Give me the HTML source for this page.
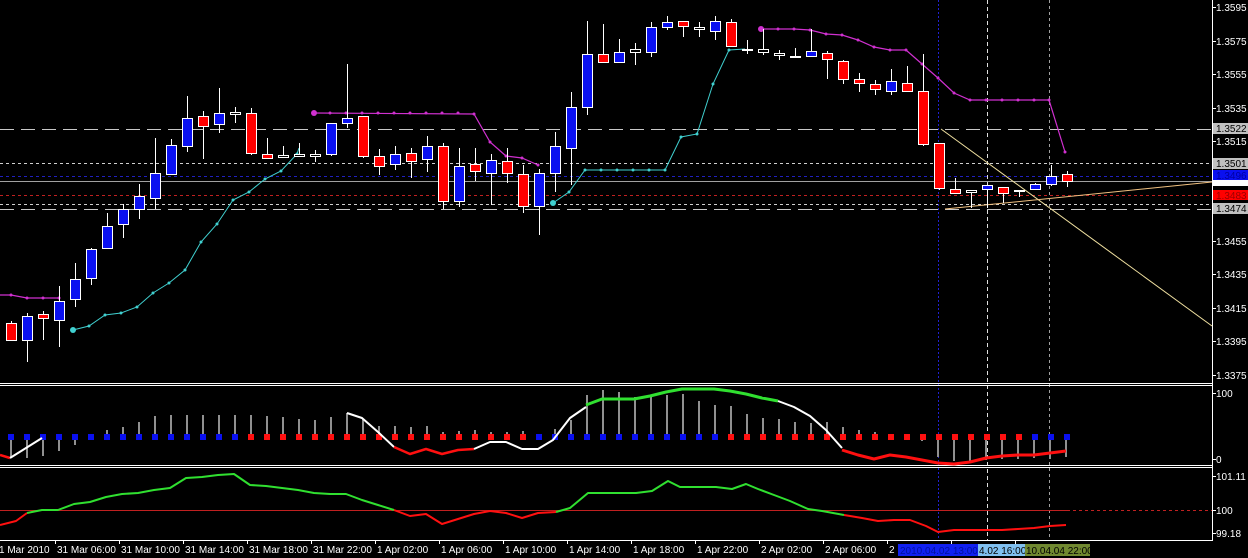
<!DOCTYPE html>
<html><head><meta charset="utf-8"><style>
html,body{margin:0;padding:0;background:#000;width:1248px;height:558px;overflow:hidden}
svg{display:block}
text{font-family:"Liberation Sans",sans-serif;font-size:10px;fill:#fff}
</style></head><body>
<svg width="1248" height="558" viewBox="0 0 1248 558" xmlns="http://www.w3.org/2000/svg">
<rect width="1248" height="558" fill="#000"/>
<g stroke-width="1" fill="none">
<line x1="0" y1="129.5" x2="1212" y2="129.5" stroke="#c8c8c8" stroke-dasharray="14,7"/>
<line x1="0" y1="163.5" x2="1212" y2="163.5" stroke="#d0d0d0" stroke-dasharray="3,3"/>
<line x1="0" y1="176.5" x2="1212" y2="176.5" stroke="#2020c0" stroke-dasharray="3,3"/>
<line x1="0" y1="181.5" x2="1212" y2="181.5" stroke="#a0a0a0"/>
<line x1="0" y1="195.5" x2="1212" y2="195.5" stroke="#c02020" stroke-dasharray="3,3"/>
<line x1="0" y1="204.5" x2="1212" y2="204.5" stroke="#d0d0d0" stroke-dasharray="3,3"/>
<line x1="0" y1="209.5" x2="1212" y2="209.5" stroke="#c8c8c8" stroke-dasharray="14,7"/>
<line x1="938.5" y1="0" x2="938.5" y2="540" stroke="#2020d0" stroke-dasharray="2,2"/>
<line x1="987.5" y1="0" x2="987.5" y2="540" stroke="#e0e0e0" stroke-dasharray="4,3"/>
<line x1="1049.5" y1="0" x2="1049.5" y2="540" stroke="#a0a0a0" stroke-dasharray="3,3"/>
<line x1="941" y1="129" x2="1212" y2="326" stroke="#f0e0a0"/>
<line x1="945" y1="209" x2="1212" y2="182" stroke="#f0c080"/>
</g>
<g stroke="#d030d0" stroke-width="1.2" fill="none">
<polyline points="0,295 11,295 27,298 43,298 59,298"/>
<polyline points="314,113 474,114 490,142 506,156 522,158 538,165"/>
<polyline points="761,29 794,29 810,30 826,34 842,35 858,40 874,47 890,50 906,50 922,64 938,78 954,93 970,100 1049,100 1065,152"/>
</g>
<g fill="#d030d0">
<circle cx="314" cy="113" r="3"/><circle cx="761" cy="29" r="3"/>
<circle cx="11" cy="295" r="1.5"/><circle cx="27" cy="298" r="1.5"/><circle cx="43" cy="298" r="1.5"/><circle cx="59" cy="298" r="1.5"/>
<circle cx="330" cy="113" r="1.5"/><circle cx="346" cy="113" r="1.5"/><circle cx="362" cy="113" r="1.5"/><circle cx="378" cy="113" r="1.5"/><circle cx="394" cy="113" r="1.5"/><circle cx="410" cy="113" r="1.5"/><circle cx="426" cy="113" r="1.5"/><circle cx="442" cy="113" r="1.5"/><circle cx="458" cy="113" r="1.5"/><circle cx="474" cy="114" r="1.5"/><circle cx="490" cy="142" r="1.5"/><circle cx="506" cy="156" r="1.5"/><circle cx="522" cy="158" r="1.5"/><circle cx="538" cy="165" r="1.5"/>
<circle cx="778" cy="29" r="1.5"/><circle cx="794" cy="29" r="1.5"/><circle cx="810" cy="30" r="1.5"/><circle cx="826" cy="34" r="1.5"/><circle cx="842" cy="35" r="1.5"/><circle cx="858" cy="40" r="1.5"/><circle cx="874" cy="47" r="1.5"/><circle cx="890" cy="50" r="1.5"/><circle cx="906" cy="50" r="1.5"/><circle cx="922" cy="64" r="1.5"/><circle cx="938" cy="78" r="1.5"/><circle cx="954" cy="93" r="1.5"/><circle cx="970" cy="100" r="1.5"/><circle cx="986" cy="100" r="1.5"/><circle cx="1002" cy="100" r="1.5"/><circle cx="1018" cy="100" r="1.5"/><circle cx="1034" cy="100" r="1.5"/><circle cx="1049" cy="100" r="1.5"/><circle cx="1065" cy="152" r="1.5"/>
</g>
<g stroke="#40d0d0" stroke-width="1" fill="none">
<polyline points="73,330 89,326 105,315 121,313 137,307 153,293 169,283 185,270 201,242 217,224 233,200 249,192 265,179 281,171 297,154 299,148"/>
<polyline points="553,203 569,192 585,170 665,170 681,137 697,134 713,84 729,50 745,49"/>
</g>
<g fill="#40d0d0">
<circle cx="73" cy="330" r="3"/><circle cx="553" cy="203" r="3"/>
<circle cx="89" cy="326" r="1.5"/><circle cx="105" cy="315" r="1.5"/><circle cx="121" cy="313" r="1.5"/><circle cx="137" cy="307" r="1.5"/><circle cx="153" cy="293" r="1.5"/><circle cx="169" cy="283" r="1.5"/><circle cx="185" cy="270" r="1.5"/><circle cx="201" cy="242" r="1.5"/><circle cx="217" cy="224" r="1.5"/><circle cx="233" cy="200" r="1.5"/><circle cx="249" cy="192" r="1.5"/><circle cx="265" cy="179" r="1.5"/><circle cx="281" cy="171" r="1.5"/><circle cx="297" cy="154" r="1.5"/>
<circle cx="569" cy="192" r="1.5"/><circle cx="585" cy="170" r="1.5"/><circle cx="601" cy="170" r="1.5"/><circle cx="617" cy="170" r="1.5"/><circle cx="633" cy="170" r="1.5"/><circle cx="649" cy="170" r="1.5"/><circle cx="665" cy="170" r="1.5"/><circle cx="681" cy="137" r="1.5"/><circle cx="697" cy="134" r="1.5"/><circle cx="713" cy="84" r="1.5"/><circle cx="729" cy="50" r="1.5"/>
</g>
<path stroke="#fff" stroke-width="1" fill="none" d="M11.5 321V341M27.5 313V362M43.5 311V340M59.5 286V347M75.5 263V307M91.5 248V285M107.5 213V248M123.5 204V238M139.5 184V219M155.5 138V209M171.5 139V175M187.5 96V152M203.5 111V159M219.5 88V133M235.5 107V123M251.5 108V155M267.5 138V158M283.5 146V158M299.5 143V156M315.5 150V162M331.5 123V156M347.5 64V128M363.5 116V158M379.5 149V175M395.5 146V170M411.5 148V178M427.5 136V172M443.5 143V209M459.5 148V207M475.5 148V181M491.5 154V205M507.5 148V183M523.5 165V213M539.5 169V235M555.5 132V192M571.5 92V185M587.5 21V115M603.5 24V62M619.5 39V62M635.5 43V65M651.5 22V57M667.5 16V30M683.5 21V37M699.5 22V37M715.5 16V40M731.5 19V47M747.5 40V54M763.5 29V55M779.5 50V60M795.5 48V57M811.5 29V57M827.5 51V79M843.5 60V84M859.5 73V92M875.5 80V95M891.5 69V95M907.5 66V91M923.5 54V146M939.5 143V190M955.5 178V193M971.5 190V208M987.5 185V208M1003.5 187V203M1019.5 190V197M1035.5 183V190M1051.5 165V186M1067.5 171V187"/>
<g stroke="#fff" stroke-width="1">
<g fill="#ff0000">
<rect x="6.5" y="323.5" width="10" height="17"/><rect x="38.5" y="314.5" width="10" height="4"/><rect x="198.5" y="116.5" width="10" height="10"/><rect x="246.5" y="113.5" width="10" height="40"/><rect x="262.5" y="154.5" width="10" height="4"/><rect x="358.5" y="116.5" width="10" height="40"/><rect x="374.5" y="156.5" width="10" height="10"/><rect x="406.5" y="153.5" width="10" height="8"/><rect x="438.5" y="146.5" width="10" height="55"/><rect x="470.5" y="164.5" width="10" height="7"/><rect x="502.5" y="161.5" width="10" height="12"/><rect x="518.5" y="174.5" width="10" height="32"/><rect x="598.5" y="54.5" width="10" height="8"/><rect x="678.5" y="21.5" width="10" height="5"/><rect x="726.5" y="22.5" width="10" height="24"/><rect x="822.5" y="53.5" width="10" height="6"/><rect x="838.5" y="61.5" width="10" height="18"/><rect x="854.5" y="79.5" width="10" height="4"/><rect x="870.5" y="84.5" width="10" height="5"/><rect x="902.5" y="83.5" width="10" height="8"/><rect x="918.5" y="91.5" width="10" height="53"/><rect x="934.5" y="143.5" width="10" height="45"/><rect x="950.5" y="189.5" width="10" height="4"/><rect x="998.5" y="187.5" width="10" height="6"/><rect x="1062.5" y="174.5" width="10" height="7"/>
</g>
<g fill="#0a10f0">
<rect x="22.5" y="316.5" width="10" height="24"/><rect x="54.5" y="301.5" width="10" height="19"/><rect x="70.5" y="279.5" width="10" height="20"/><rect x="86.5" y="249.5" width="10" height="29"/><rect x="102.5" y="226.5" width="10" height="22"/><rect x="118.5" y="209.5" width="10" height="15"/><rect x="134.5" y="196.5" width="10" height="13"/><rect x="150.5" y="173.5" width="10" height="25"/><rect x="166.5" y="145.5" width="10" height="29"/><rect x="182.5" y="118.5" width="10" height="28"/><rect x="214.5" y="113.5" width="10" height="11"/><rect x="326.5" y="123.5" width="10" height="31"/><rect x="342.5" y="118.5" width="10" height="5"/><rect x="390.5" y="154.5" width="10" height="10"/><rect x="422.5" y="146.5" width="10" height="13"/><rect x="454.5" y="166.5" width="10" height="35"/><rect x="486.5" y="160.5" width="10" height="13"/><rect x="534.5" y="173.5" width="10" height="33"/><rect x="550.5" y="146.5" width="10" height="27"/><rect x="566.5" y="107.5" width="10" height="41"/><rect x="582.5" y="54.5" width="10" height="53"/><rect x="614.5" y="52.5" width="10" height="10"/><rect x="646.5" y="27.5" width="10" height="25"/><rect x="662.5" y="22.5" width="10" height="5"/><rect x="710.5" y="21.5" width="10" height="10"/><rect x="806.5" y="51.5" width="10" height="5"/><rect x="886.5" y="81.5" width="10" height="10"/><rect x="982.5" y="185.5" width="10" height="4"/><rect x="1030.5" y="184.5" width="10" height="5"/><rect x="1046.5" y="176.5" width="10" height="8"/>
</g>
<g fill="#000">
<rect x="230.5" y="112.5" width="10" height="2"/><rect x="278.5" y="155.5" width="10" height="2"/><rect x="294.5" y="154.5" width="10" height="2"/><rect x="310.5" y="154.5" width="10" height="2"/><rect x="630.5" y="49.5" width="10" height="3"/><rect x="694.5" y="27.5" width="10" height="2"/><rect x="742.5" y="49.5" width="10" height="1"/><rect x="758.5" y="49.5" width="10" height="3"/><rect x="774.5" y="53.5" width="10" height="2"/><rect x="790.5" y="56.5" width="10" height="1"/><rect x="966.5" y="190.5" width="10" height="2"/><rect x="1014.5" y="190.5" width="10" height="1"/>
</g>
</g>
<g stroke="#fff" stroke-width="1" fill="none">
<line x1="0" y1="383.5" x2="1212" y2="383.5"/><line x1="0" y1="385.5" x2="1212" y2="385.5"/>
<line x1="0" y1="465.5" x2="1212" y2="465.5"/><line x1="0" y1="467.5" x2="1212" y2="467.5"/>
<line x1="0" y1="540.5" x2="1212" y2="540.5"/>
<line x1="1212.5" y1="0" x2="1212.5" y2="541"/>
</g>
<path stroke="#909090" stroke-width="2" fill="none" d="M11 437V458M27 437V458M43 437V456M59 437V451M75 437V445M107 437V430M123 437V427M139 437V422M155 437V416M171 437V415M187 437V415M203 437V415M219 437V415M235 437V415M251 437V415M267 437V416M283 437V417M299 437V419M315 437V420M331 437V417M347 437V413M363 437V419M379 437V426M395 437V426M411 437V427M427 437V426M443 437V432M459 437V431M475 437V430M491 437V432M507 437V432M523 437V431M555 437V429M571 437V420M587 437V395M603 437V390M619 437V392M635 437V397M651 437V396M667 437V395M683 437V394M699 437V401M715 437V405M731 437V406M747 437V414M763 437V418M779 437V419M795 437V422M811 437V423M827 437V422M843 437V427M859 437V430M875 437V432M891 437V434M922 437V441M938 437V457M954 437V461M970 437V461M986 437V460M1002 437V459M1018 437V459M1034 437V458M1050 437V459M1066 437V457"/>
<g fill="#0a10f0">
<rect x="8" y="434" width="6" height="6"/><rect x="24" y="434" width="6" height="6"/><rect x="40" y="434" width="6" height="6"/><rect x="56" y="434" width="6" height="6"/><rect x="72" y="434" width="6" height="6"/><rect x="88" y="434" width="6" height="6"/><rect x="104" y="434" width="6" height="6"/><rect x="120" y="434" width="6" height="6"/><rect x="136" y="434" width="6" height="6"/><rect x="152" y="434" width="6" height="6"/><rect x="168" y="434" width="6" height="6"/><rect x="184" y="434" width="6" height="6"/><rect x="200" y="434" width="6" height="6"/><rect x="216" y="434" width="6" height="6"/><rect x="232" y="434" width="6" height="6"/>
<rect x="536" y="434" width="6" height="6"/><rect x="552" y="434" width="6" height="6"/><rect x="568" y="434" width="6" height="6"/><rect x="584" y="434" width="6" height="6"/><rect x="600" y="434" width="6" height="6"/><rect x="616" y="434" width="6" height="6"/><rect x="632" y="434" width="6" height="6"/><rect x="648" y="434" width="6" height="6"/><rect x="664" y="434" width="6" height="6"/><rect x="680" y="434" width="6" height="6"/><rect x="696" y="434" width="6" height="6"/><rect x="712" y="434" width="6" height="6"/>
<rect x="1032" y="434" width="6" height="6"/><rect x="1048" y="434" width="6" height="6"/><rect x="1064" y="434" width="6" height="6"/>
</g>
<g fill="#ff1010">
<rect x="248" y="434" width="6" height="6"/><rect x="264" y="434" width="6" height="6"/><rect x="280" y="434" width="6" height="6"/><rect x="296" y="434" width="6" height="6"/><rect x="312" y="434" width="6" height="6"/><rect x="328" y="434" width="6" height="6"/><rect x="344" y="434" width="6" height="6"/><rect x="360" y="434" width="6" height="6"/><rect x="376" y="434" width="6" height="6"/><rect x="392" y="434" width="6" height="6"/><rect x="408" y="434" width="6" height="6"/><rect x="424" y="434" width="6" height="6"/><rect x="440" y="434" width="6" height="6"/><rect x="456" y="434" width="6" height="6"/><rect x="472" y="434" width="6" height="6"/><rect x="488" y="434" width="6" height="6"/><rect x="504" y="434" width="6" height="6"/><rect x="520" y="434" width="6" height="6"/>
<rect x="728" y="434" width="6" height="6"/><rect x="744" y="434" width="6" height="6"/><rect x="760" y="434" width="6" height="6"/><rect x="776" y="434" width="6" height="6"/><rect x="792" y="434" width="6" height="6"/><rect x="808" y="434" width="6" height="6"/><rect x="824" y="434" width="6" height="6"/><rect x="840" y="434" width="6" height="6"/><rect x="856" y="434" width="6" height="6"/><rect x="872" y="434" width="6" height="6"/><rect x="888" y="434" width="6" height="6"/><rect x="904" y="434" width="6" height="6"/><rect x="920" y="434" width="6" height="6"/><rect x="936" y="434" width="6" height="6"/><rect x="952" y="434" width="6" height="6"/><rect x="968" y="434" width="6" height="6"/><rect x="984" y="434" width="6" height="6"/><rect x="1000" y="434" width="6" height="6"/><rect x="1016" y="434" width="6" height="6"/>
</g>
<g fill="none" stroke-width="2.5" stroke-linejoin="round">
<polyline stroke="#ff1010" points="0,455 10,458"/>
<polyline stroke="#fff" stroke-width="2" points="10,458 26,448 42,438"/>
<polyline stroke="#fff" stroke-width="2" points="347,413 362,418 378,432 394,447"/>
<polyline stroke="#ff1010" points="394,447 410,454 426,449 442,454 458,450 474,449"/>
<polyline stroke="#fff" stroke-width="2" points="474,449 490,442 506,442 522,449 538,449 553,440 570,418 586,407"/>
<polyline stroke="#30e030" stroke-width="3" points="586,405 602,399 618,399 634,399 650,396 666,392 682,389 698,389 714,389 730,391 746,394 762,398 778,401"/>
<polyline stroke="#fff" stroke-width="2" points="778,401 794,407 810,416 826,430 842,448"/>
<polyline stroke="#ff1010" stroke-width="3" points="842,450 858,455 874,459 890,455 906,457 922,460 938,463 954,464 970,462 986,458 1002,456 1018,455 1034,455 1050,453 1066,451"/>
</g>
<line x1="0" y1="510.5" x2="1067" y2="510.5" stroke="#c02020" stroke-width="1"/>
<line x1="1067" y1="510.5" x2="1212" y2="510.5" stroke="#c02020" stroke-dasharray="3,3"/>
<g fill="none" stroke-width="2" stroke-linejoin="round">
<polyline stroke="#ff1010" points="0,525 16,521 27,513"/>
<polyline stroke="#30e030" points="27,513 42,510 58,510 74,504 90,502 106,497 122,494 138,493 154,490 170,488 186,478 202,477 218,475 234,474 250,485 266,486 282,488 298,490 314,493 330,494 346,494 362,500 378,505 394,510"/>
<polyline stroke="#ff1010" points="394,510 410,516 426,514 442,524 458,519 474,514 490,511 506,513 522,518 538,513 556,512"/>
<polyline stroke="#30e030" points="556,512 570,508 588,493 604,493 620,493 636,493 652,491 668,481 680,487 700,487 716,487 732,489 746,484 758,489 774,495 790,501 808,509 822,511 844,515"/>
<polyline stroke="#ff1010" points="844,515 862,518 878,521 894,520 910,520 926,526 938,532 954,530 970,530 986,530 1002,530 1018,529 1034,528 1050,526 1066,525"/>
</g>
<g stroke="#fff"><path d="M1212 7.5h4M1212 41.5h4M1212 74.5h4M1212 108.5h4M1212 141.5h4M1212 241.5h4M1212 274.5h4M1212 308.5h4M1212 341.5h4M1212 375.5h4M1212 393.5h4M1212 459.5h4M1212 476.5h4M1212 510.5h4M1212 533.5h4"/></g>
<text x="1216" y="11">1.3595</text><text x="1216" y="45">1.3575</text><text x="1216" y="78">1.3555</text><text x="1216" y="112">1.3535</text><text x="1216" y="145">1.3515</text><text x="1216" y="245">1.3455</text><text x="1216" y="278">1.3435</text><text x="1216" y="312">1.3415</text><text x="1216" y="345">1.3395</text><text x="1216" y="379">1.3375</text>
<rect x="1213" y="123" width="35" height="11" fill="#c0c0c0"/><text x="1216" y="132" style="fill:#000">1.3522</text>
<rect x="1213" y="158" width="35" height="11" fill="#c0c0c0"/><text x="1216" y="167" style="fill:#000">1.3501</text>
<rect x="1213" y="170" width="35" height="10" fill="#0a10f0"/><text x="1216" y="179" style="fill:#0000a0">1.3496</text>
<rect x="1213" y="180" width="35" height="6" fill="#fff"/>
<rect x="1213" y="190" width="35" height="10" fill="#ff0000"/><text x="1216" y="199" style="fill:#900">1.3483</text>
<rect x="1213" y="203" width="35" height="11" fill="#c0c0c0"/><text x="1216" y="212" style="fill:#000">1.3474</text>
<text x="1216" y="397">100</text><text x="1216" y="463">0</text>
<text x="1216" y="480">101.11</text><text x="1216" y="514">100</text><text x="1216" y="537">99.18</text>
<g stroke="#fff"><path d="M55.5 540v4M119.5 540v4M183.5 540v4M247.5 540v4M311.5 540v4M375.5 540v4M439.5 540v4M503.5 540v4M567.5 540v4M631.5 540v4M695.5 540v4M759.5 540v4M823.5 540v4M887.5 540v4M951.5 540v4M1015.5 540v4"/></g>
<text x="-1" y="553">1 Mar 2010</text><text x="57" y="553">31 Mar 06:00</text><text x="121" y="553">31 Mar 10:00</text><text x="185" y="553">31 Mar 14:00</text><text x="249" y="553">31 Mar 18:00</text><text x="313" y="553">31 Mar 22:00</text><text x="377" y="553">1 Apr 02:00</text><text x="441" y="553">1 Apr 06:00</text><text x="505" y="553">1 Apr 10:00</text><text x="569" y="553">1 Apr 14:00</text><text x="633" y="553">1 Apr 18:00</text><text x="697" y="553">1 Apr 22:00</text><text x="761" y="553">2 Apr 02:00</text><text x="825" y="553">2 Apr 06:00</text><text x="889" y="553">2</text>
<rect x="898" y="544" width="80" height="12" fill="#1020f0"/><text x="900" y="554" style="fill:#0010a0">2010.04.02 13:00</text>
<rect x="978" y="544" width="47" height="12" fill="#80c0f0"/><text x="979" y="554" style="fill:#000">4.02 16:00</text>
<rect x="1025" y="544" width="65" height="12" fill="#708830"/><text x="1026" y="554" style="fill:#000">10.04.04 22:00</text>
</svg>
</body></html>
